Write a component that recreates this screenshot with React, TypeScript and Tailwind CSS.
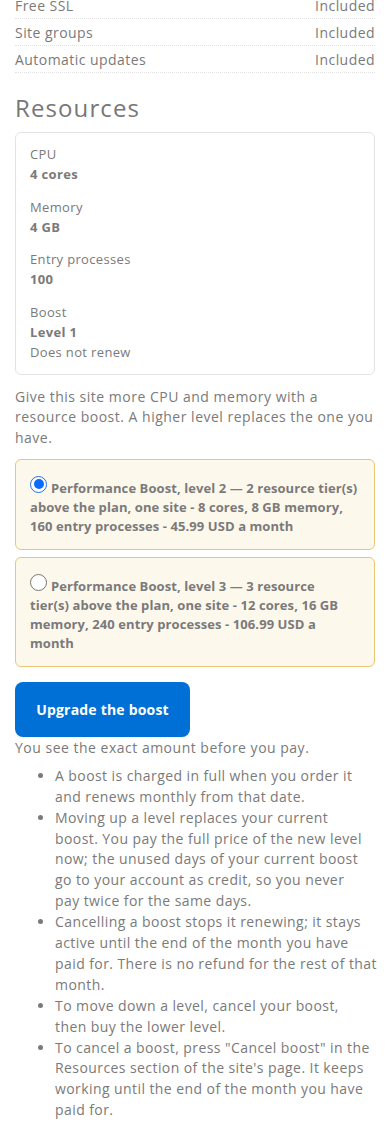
import React from "react";

const rows = [
  ["Free SSL", "Included"],
  ["Site groups", "Included"],
  ["Automatic updates", "Included"],
];

const resources: { label: string; value: string; note?: string }[] = [
  { label: "CPU", value: "4 cores" },
  { label: "Memory", value: "4 GB" },
  { label: "Entry processes", value: "100" },
  { label: "Boost", value: "Level 1", note: "Does not renew" },
];

const options: { checked: boolean; lines: string[] }[] = [
  {
    checked: true,
    lines: [
      "Performance Boost, level 2 \u2014 2 resource tier(s)",
      "above the plan, one site - 8 cores, 8 GB memory,",
      "160 entry processes - 45.99 USD a month",
    ],
  },
  {
    checked: false,
    lines: [
      "Performance Boost, level 3 \u2014 3 resource",
      "tier(s) above the plan, one site - 12 cores, 16 GB",
      "memory, 240 entry processes - 106.99 USD a",
      "month",
    ],
  },
];

const bullets: string[][] = [
  ["A boost is charged in full when you order it", "and renews monthly from that date."],
  [
    "Moving up a level replaces your current",
    "boost. You pay the full price of the new level",
    "now; the unused days of your current boost",
    "go to your account as credit, so you never",
    "pay twice for the same days.",
  ],
  [
    "Cancelling a boost stops it renewing; it stays",
    "active until the end of the month you have",
    "paid for. There is no refund for the rest of that",
    "month.",
  ],
  ["To move down a level, cancel your boost,", "then buy the lower level."],
  [
    'To cancel a boost, press "Cancel boost" in the',
    "Resources section of the site's page. It keeps",
    "working until the end of the month you have",
    "paid for.",
  ],
];

function Radio({ checked }: { checked: boolean }) {
  return checked ? (
    <span className="inline-block w-[17px] h-[17px] rounded-full border-[1.5px] border-[#1a73e8] bg-white mr-[4px] align-baseline relative">
      <span className="absolute inset-[2.5px] rounded-full bg-[#0a6cff]" />
    </span>
  ) : (
    <span className="inline-block w-[17px] h-[17px] rounded-full border border-[#767676] bg-white mr-[4px] align-baseline" />
  );
}

function Lines({ lines }: { lines: string[] }) {
  return (
    <>
      {lines.map((l, i) => (
        <React.Fragment key={i}>
          {i > 0 && <br />}
          {l}
        </React.Fragment>
      ))}
    </>
  );
}

export default function App() {
  return (
    <div
      className="bg-white text-[#7a7a7a] px-[15px] overflow-hidden h-[1140px]"
      style={{ fontFamily: '"Open Sans", "Noto Sans", sans-serif' }}
    >
      <div className="mt-[-8px]">
        {rows.map(([a, b]) => (
          <div
            key={a}
            className="flex justify-between items-center h-[27px] border-b border-dotted border-[#e2e2e2] text-[14px] tracking-[0.45px]"
          >
            <span>{a}</span>
            <span>{b}</span>
          </div>
        ))}
      </div>

      <h2 className="mt-[20px] text-[24px] leading-[29px] font-medium text-[#777] tracking-[1.1px]">
        Resources
      </h2>

      <div className="mt-[10px] border border-[#e3e3e3] rounded-[6px] px-[14px] py-[11px] flex flex-col gap-[12px]">
        {resources.map((r) => (
          <div key={r.label} className="text-[13px] leading-[20.3px] tracking-[0.35px]">
            <div>{r.label}</div>
            <div className="font-bold">{r.value}</div>
            {r.note && <div>{r.note}</div>}
          </div>
        ))}
      </div>

      <p className="mt-[12px] text-[14px] leading-[20.7px] tracking-[0.5px]">
        Give this site more CPU and memory with a resource boost. A higher level replaces the one you have.
      </p>

      <div className="mt-[10px] flex flex-col gap-[7px]">
        {options.map((o, i) => (
          <div
            key={i}
            className="bg-[#fdf8ec] border border-[#e8c877] rounded-[6px] px-[14px] pt-[16px] pb-[13px] text-[13px] leading-[19px] font-bold tracking-[0.08px] whitespace-nowrap"
          >
            <Radio checked={o.checked} />
            <Lines lines={o.lines} />
          </div>
        ))}
      </div>

      <button className="mt-[15px] w-[175px] h-[55px] rounded-[8px] bg-[#0070d6] text-white text-[14px] font-bold tracking-[0.2px]">
        Upgrade the boost
      </button>

      <p className="text-[14px] leading-[21px] tracking-[0.5px]">
        You see the exact amount before you pay.
      </p>

      <ul className="mt-[8px] list-disc pl-[40px] text-[14px] leading-[20.9px] tracking-[0.42px] whitespace-nowrap">
        {bullets.map((b, i) => (
          <li key={i}>
            <Lines lines={b} />
          </li>
        ))}
      </ul>
    </div>
  );
}
